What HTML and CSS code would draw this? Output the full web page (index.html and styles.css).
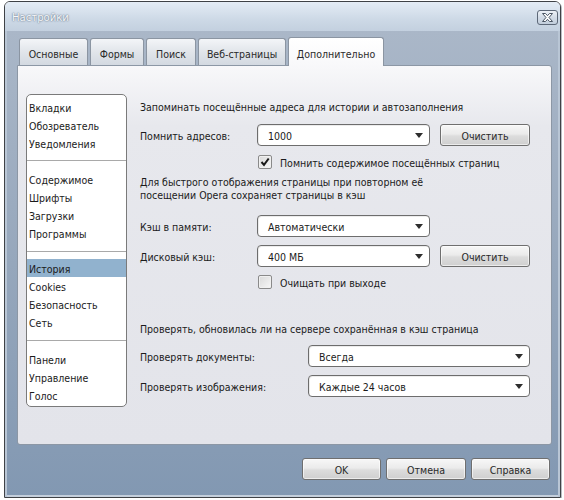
FILE: index.html
```html
<!DOCTYPE html>
<html lang="ru">
<head>
<meta charset="utf-8">
<title>Настройки</title>
<link rel="stylesheet" href="styles.css">
</head>
<body>
<div class="window">
  <div class="titlebar">
    <span class="title">Настройки</span>
    <span class="close">
      <svg width="13" height="9" viewBox="0 0 13 9">
        <path d="M1.5 0.5 L4.5 0.5 L6.5 2.7 L8.5 0.5 L11.5 0.5 L8 4.5 L11.5 8.5 L8.5 8.5 L6.5 6.3 L4.5 8.5 L1.5 8.5 L5 4.5 Z" fill="#ffffff" stroke="#4a5563" stroke-width="1" stroke-linejoin="round"/>
      </svg>
    </span>
  </div>
  <div class="frame">
    <div class="tabs">
      <div class="tab t1">Основные</div>
      <div class="tab t2">Формы</div>
      <div class="tab t3">Поиск</div>
      <div class="tab t4">Веб-страницы</div>
      <div class="tab t5 active">Дополнительно</div>
    </div>
    <div class="panel">
      <div class="sidebar">
        <div class="group g1">
          <div class="item">Вкладки</div>
          <div class="item">Обозреватель</div>
          <div class="item">Уведомления</div>
        </div>
        <div class="group g2">
          <div class="item">Содержимое</div>
          <div class="item">Шрифты</div>
          <div class="item">Загрузки</div>
          <div class="item">Программы</div>
        </div>
        <div class="group g3">
          <div class="item selected">История</div>
          <div class="item">Cookies</div>
          <div class="item">Безопасность</div>
          <div class="item">Сеть</div>
        </div>
        <div class="group g4">
          <div class="item">Панели</div>
          <div class="item">Управление</div>
          <div class="item">Голос</div>
        </div>
      </div>
      <div class="content">
        <div class="heading">Запоминать посещённые адреса для истории и автозаполнения</div>
        <div class="row r-addr">
          <span class="label">Помнить адресов:</span>
          <div class="select"><span class="val">1000</span><span class="arrow"></span></div>
          <div class="btn btn-side">Очистить</div>
        </div>
        <div class="check-row c1">
          <span class="checkbox checked">
            <svg width="10" height="10" viewBox="0 0 10 10"><path d="M1.5 5 L4 7.8 L8.7 1.5" fill="none" stroke="#1a1a1a" stroke-width="2"/></svg>
          </span>
          <span class="ctext">Помнить содержимое посещённых страниц</span>
        </div>
        <div class="para">Для быстрого отображения страницы при повторном её<br>посещении Opera сохраняет страницы в кэш</div>
        <div class="row r-mem">
          <span class="label">Кэш в памяти:</span>
          <div class="select"><span class="val">Автоматически</span><span class="arrow"></span></div>
        </div>
        <div class="row r-disk">
          <span class="label">Дисковый кэш:</span>
          <div class="select"><span class="val">400 МБ</span><span class="arrow"></span></div>
          <div class="btn btn-side">Очистить</div>
        </div>
        <div class="check-row c2">
          <span class="checkbox"></span>
          <span class="ctext">Очищать при выходе</span>
        </div>
        <div class="heading h2">Проверять, обновилась ли на сервере сохранённая в кэш страница</div>
        <div class="row r-docs">
          <span class="label wide">Проверять документы:</span>
          <div class="select long"><span class="val">Всегда</span><span class="arrow"></span></div>
        </div>
        <div class="row r-img">
          <span class="label wide">Проверять изображения:</span>
          <div class="select long"><span class="val">Каждые 24 часов</span><span class="arrow"></span></div>
        </div>
      </div>
    </div>
    <div class="buttons">
      <div class="btn b-ok">OK</div>
      <div class="btn b-cancel">Отмена</div>
      <div class="btn b-help">Справка</div>
    </div>
  </div>
</div>
</body>
</html>
```

FILE: styles.css
```css
html, body {
  margin: 0;
  padding: 0;
  background: #ffffff;
}

body {
  font-family: "DejaVu Sans Condensed", "Liberation Sans", sans-serif;
  font-size: 10.5px;
  color: #1b1b1b;
}

.window {
  margin: 1px 0 0 4px;
  width: 557px;
  height: 497px;
  box-sizing: border-box;
  border: 1px solid #3f4246;
  border-radius: 6px 6px 0 0;
  display: flex;
  flex-direction: column;
  overflow: hidden;
  box-shadow: 1px 1px 0 #b8bcc2;
}

.titlebar {
  height: 29px;
  flex: none;
  display: flex;
  align-items: center;
  justify-content: space-between;
  padding: 0 2px 0 7px;
  background: linear-gradient(#e4ecf5, #cdd9e6 60%, #c3d0df);
}

.title {
  font-size: 11.2px;
  padding-top: 2px;
  color: #f5f7fa;
  text-shadow: 0 0 2px #5f6f83, 0 0 1px #7a8a9c;
}

.close {
  width: 21px;
  height: 15px;
  margin-top: 2px;
  box-sizing: border-box;
  border: 1px solid #5d6878;
  border-radius: 3px;
  background: linear-gradient(#eef2f7, #d3dce7 50%, #c2cedc);
  display: flex;
  align-items: center;
  justify-content: center;
}

.frame {
  flex: 1;
  display: flex;
  flex-direction: column;
  padding: 6px 8px 0 12px;
  background: linear-gradient(#aab7c8, #96a7bc 50%, #8298b2);
  box-shadow: inset 2px 0 0 #b9c6d5, inset -2px 0 0 #b9c6d5, inset 0 -2px 0 #c4cfdc;
}

.tabs {
  display: flex;
  align-items: flex-end;
  gap: 2px;
  height: 28px;
  margin-left: 2px;
}

.tab {
  height: 27px;
  box-sizing: border-box;
  border: 1px solid #8b95a2;
  border-bottom: none;
  border-radius: 3px 3px 0 0;
  background: linear-gradient(#f3f5f8, #e1e5ea 50%, #d3d9e1);
  display: flex;
  align-items: center;
  justify-content: center;
  color: #2a2a2a;
  padding-top: 3px;
}

.t1 { width: 69px; }
.t2 { width: 54px; }
.t3 { width: 50px; }
.t4 { width: 88px; }
.t5 { width: 96px; }

.tab.active {
  height: 29px;
  margin-bottom: -1px;
  position: relative;
  z-index: 1;
  background: linear-gradient(#ffffff, #f8f8fa);
  padding-top: 3px;
}

.panel {
  width: 535px;
  height: 380px;
  box-sizing: border-box;
  border: 1px solid #8c97a5;
  border-radius: 0 3px 3px 3px;
  background: linear-gradient(#f8f8fa, #e7e8ed 60px, #e3e4ea);
  display: flex;
  align-items: flex-start;
  padding: 28px 0 0 8px;
}

.sidebar {
  width: 101px;
  height: 313px;
  flex: none;
  box-sizing: border-box;
  border: 1px solid #7a7a7a;
  border-radius: 5px;
  background: #ffffff;
  overflow: hidden;
}

.group {
  padding: 9px 0 9px;
  border-bottom: 1px solid #a9a9a9;
}

.group.g1 { padding: 3px 0 8px; }
.group.g3 { padding-top: 7px; }
.group.g4 { border-bottom: none; }

.item {
  height: 18px;
  box-sizing: border-box;
  padding: 2px 0 0 2px;
  line-height: 16px;
  white-space: nowrap;
}

.item.selected {
  background: #91b2ce;
}

.content {
  margin-left: 13px;
  padding-top: 4px;
  display: flex;
  flex-direction: column;
}

.heading {
  line-height: 14px;
  padding-top: 2px;
  height: 14px;
  box-sizing: border-box;
  white-space: nowrap;
}

.heading.h2 { margin-top: 31px; }

.row {
  display: flex;
  align-items: center;
  height: 22px;
}

.r-addr { margin-top: 12px; }
.r-mem { margin-top: 13px; }
.r-disk { margin-top: 8px; }
.r-docs { margin-top: 11px; }
.r-img { margin-top: 8px; }

.label {
  width: 117px;
  flex: none;
  padding-top: 2px;
  white-space: nowrap;
}

.label.wide { width: 168px; }

.select {
  width: 173px;
  height: 22px;
  flex: none;
  box-sizing: border-box;
  border: 1px solid #6d6d6d;
  border-radius: 4px;
  background: #ffffff;
  box-shadow: inset 1px 1px 0 #ececec;
  display: flex;
  align-items: center;
  justify-content: space-between;
  padding: 0 6px 0 10px;
}

.select.long { width: 222px; }

.val { padding-top: 2px; }

.arrow {
  width: 0;
  height: 0;
  border-left: 4px solid transparent;
  border-right: 4px solid transparent;
  border-top: 5px solid #2e2e2e;
  margin-top: 1px;
}

.btn {
  height: 22px;
  box-sizing: border-box;
  border: 1px solid #6f6f6f;
  border-radius: 3px;
  background: linear-gradient(#f7f7f7, #ebebeb 45%, #dcdcdc 55%, #cfcfcf);
  box-shadow: inset 0 0 0 1px rgba(255, 255, 255, 0.6);
  display: flex;
  align-items: center;
  justify-content: center;
  padding-top: 2px;
  color: #2a2a2a;
}

.btn-side {
  width: 90px;
  margin-left: 10px;
}

.check-row {
  display: flex;
  align-items: center;
  height: 14px;
  margin-left: 118px;
  gap: 8px;
  white-space: nowrap;
}

.ctext { padding-top: 1px; }

.c1 { margin-top: 9px; }
.c2 { margin-top: 8px; }

.checkbox {
  width: 14px;
  height: 14px;
  flex: none;
  box-sizing: border-box;
  border: 1px solid #8a8a8a;
  border-radius: 2px;
  background: linear-gradient(135deg, #d9d9d9, #f7f7f7);
  box-shadow: inset 0 0 0 1px #f0f0f0;
  display: flex;
  align-items: center;
  justify-content: center;
}

.para {
  margin-top: 6px;
  padding-top: 1px;
  line-height: 13px;
  white-space: nowrap;
}

.buttons {
  display: flex;
  justify-content: flex-end;
  gap: 5px;
  margin-top: 13px;
  margin-right: 2px;
}

.b-ok { width: 79px; }
.b-cancel { width: 80px; }
.b-help { width: 79px; }
```
